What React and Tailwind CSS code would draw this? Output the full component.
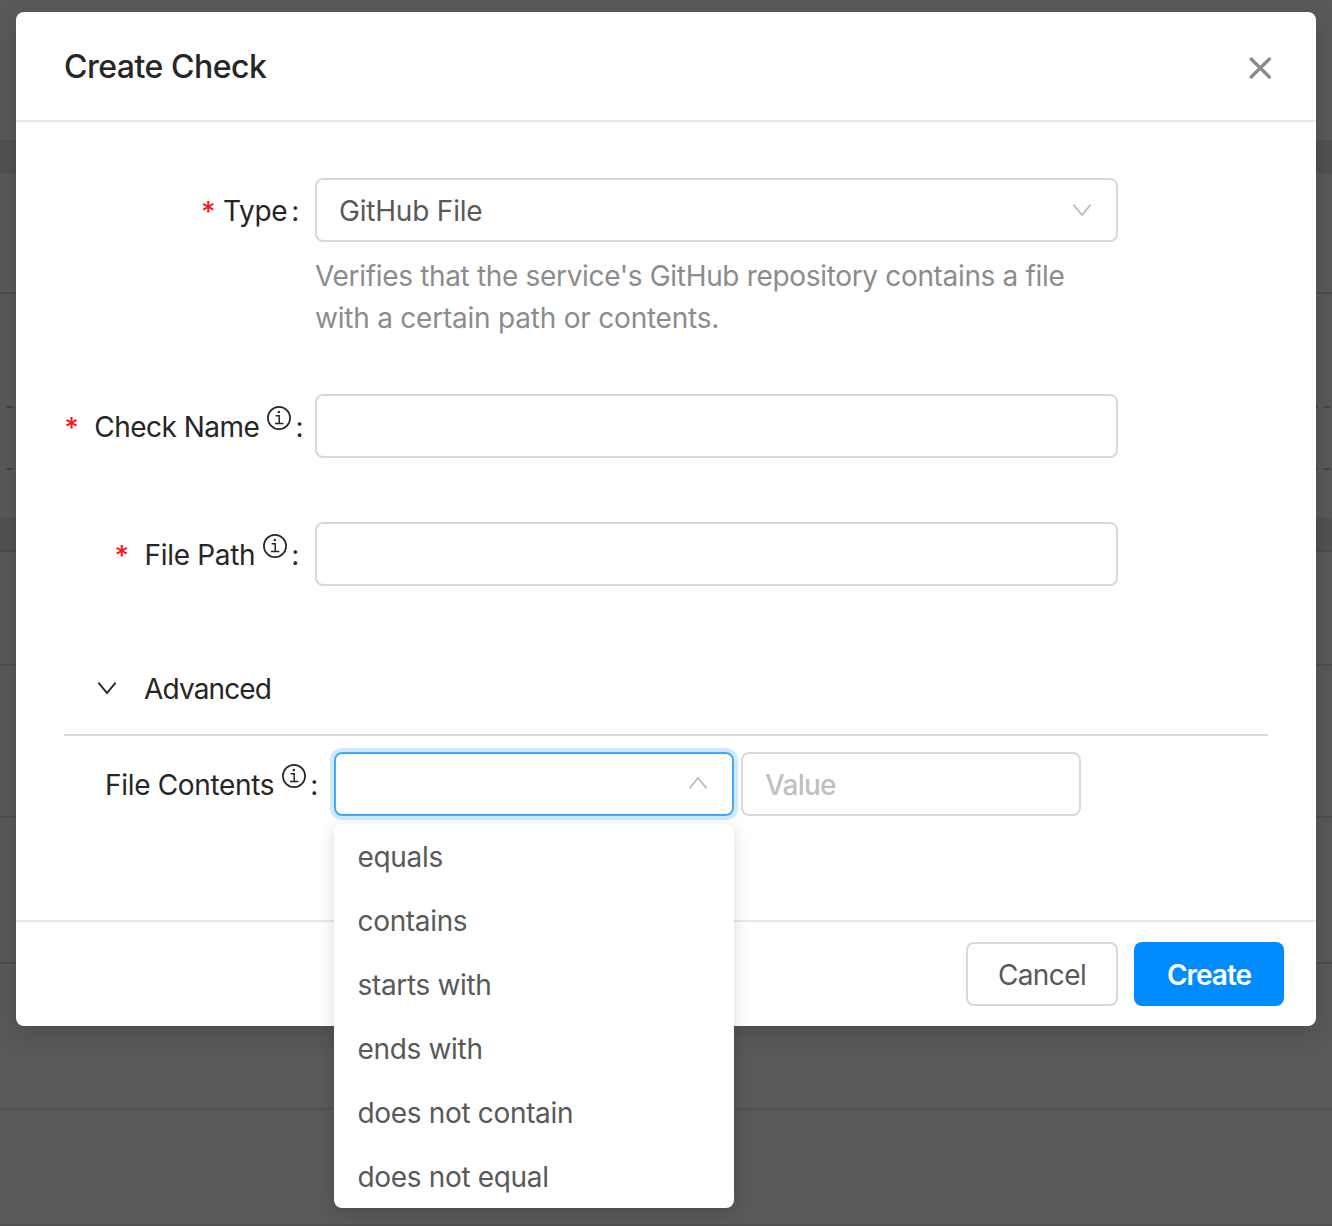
import { useState } from "react";
import clsx from "clsx";

const OPERATORS = ["equals", "contains", "starts with", "ends with", "does not contain", "does not equal"];

function Chevron({ up, className }) {
  return (
    <svg viewBox="0 0 20 14" className={clsx("h-[14px] w-5 shrink-0", className)} fill="none" stroke="currentColor" strokeWidth="1.9">
      {up ? <path d="M1.4 12.4 L10 2 L18.6 12.4" /> : <path d="M1.4 1.6 L10 12 L18.6 1.6" />}
    </svg>
  );
}

function InfoIcon() {
  return (
    <svg viewBox="0 0 24 24" className="mb-[19px] ml-2 h-6 w-6 shrink-0" fill="none" stroke="currentColor" strokeWidth="1.7">
      <circle cx="12" cy="12" r="11.1" />
      <path d="M8.6 9.7h3.6v7.6M8 17.4h8.4" strokeWidth="1.5" />
      <circle cx="11.8" cy="6" r="1.2" fill="currentColor" stroke="none" />
    </svg>
  );
}

function Label({ text, required, info, className }) {
  return (
    <div className={clsx("flex h-16 shrink-0 items-center justify-end whitespace-nowrap pt-0.5 text-[#262626]", className)}>
      {required && (
        <span className={clsx("flex w-[14px] justify-center pt-px text-[28px] font-medium text-[#fa1622]", info ? "mr-4" : "mr-2")}>
          *
        </span>
      )}
      <span>{text}</span>
      {info && <InfoIcon />}
      <span className="ml-1">:</span>
    </div>
  );
}

function DashedLine() {
  return (
    <div className="h-0.5 bg-[repeating-linear-gradient(90deg,transparent_0_6px,#424242_6px_11.975px)] bg-[position:0.7px_0]" />
  );
}

/* table rows that stay visible behind the mask */
function PageBehind() {
  return (
    <div className="flex h-full flex-col bg-[#595959]">
      <div className="h-[142px] border-b-2 border-[#4f4f4f]" />
      <div className="h-8 bg-[#515153]" />
      <div className="h-[120px] border-b-2 border-[#4d4d4d]" />
      <div className="h-28" />
      <DashedLine />
      <div className="h-[60px]" />
      <DashedLine />
      <div className="h-12" />
      <div className="h-[34px] border-b-2 border-[#4b4b4b] bg-[#515153]" />
      <div className="h-[114px] border-b-2 border-[#4d4d4d]" />
      <div className="h-[152px] border-b-2 border-[#4d4d4d]" />
      <div className="h-[146px] border-b-2 border-[#4d4d4d]" />
      <div className="h-[146px] border-b-2 border-[#515151]" />
      <div className="h-[116px] border-b-2 border-[#515151]" />
    </div>
  );
}

export default function App() {
  const [name, setName] = useState("");
  const [path, setPath] = useState("");
  const [operator, setOperator] = useState("");
  const [value, setValue] = useState("");

  return (
    <div className="relative h-[1226px] w-[1332px] overflow-hidden font-['Inter',sans-serif] text-[28px] leading-[42px] tracking-[-0.33px] text-[#595959]">
      <PageBehind />

      <div className="absolute inset-0 px-4 pt-3">
        <div className="flex h-[1014px] flex-col rounded-lg bg-white shadow-[0_8px_24px_rgba(0,0,0,0.15)]">
          <header className="flex h-[110px] shrink-0 items-center justify-between border-b-2 border-[#e8e8e8] pr-11 pl-12">
            <h1 className="pt-0.5 text-[32px] font-medium tracking-[-0.5px] text-[#262626]">Create Check</h1>
            <button aria-label="Close" className="mt-1 text-[#8c8c8c]">
              <svg viewBox="0 0 24 24" className="h-6 w-6" fill="none" stroke="currentColor" strokeWidth="3.4" strokeLinecap="round">
                <path d="M3.2 3 L21.4 21 M21.4 3 L3.2 21" />
              </svg>
            </button>
          </header>

          <div className="flex-1 px-12 pt-14">
            <div className="flex">
              <Label text="Type" required className="w-[251px] pr-4" />
              <div className="w-[803px]">
                <button className="flex h-16 w-full items-center justify-between rounded-lg border-2 border-[#d9d9d9] pr-6 pl-[22px]">
                  <span className="pt-0.5 tracking-[-0.2px]">GitHub File</span>
                  <Chevron className="text-[#bfbfbf]" />
                </button>
                <p className="mt-[13px] whitespace-nowrap text-[#8c8c8c]">
                  Verifies that the service's GitHub repository contains a file
                  <br />
                  <span className="tracking-[-0.22px]">with a certain path or contents.</span>
                </p>
              </div>
            </div>

            <div className="mt-[55px] flex">
              <Label text="Check Name" required info className="w-[251px] pr-3 tracking-[-0.5px]" />
              <input
                value={name}
                onChange={(e) => setName(e.target.value)}
                className="h-16 w-[803px] rounded-lg border-2 border-[#d9d9d9] px-[22px] outline-none"
              />
            </div>

            <div className="mt-16 flex">
              <Label text="File Path" required info className="w-[251px] pr-4" />
              <input
                value={path}
                onChange={(e) => setPath(e.target.value)}
                className="h-16 w-[803px] rounded-lg border-2 border-[#d9d9d9] px-[22px] outline-none"
              />
            </div>

            <div className="mt-[82px] flex h-[68px] items-start border-b-2 border-[#d9d9d9] pl-[33px] text-[#262626]">
              <Chevron className="mt-[13px]" />
              <span className="ml-[27px] tracking-[-0.85px]">Advanced</span>
            </div>

            <div className="mt-4 flex">
              <Label text="File Contents" info className="w-[270px] pr-4" />
              <div className="relative w-[400px]">
                <button className="flex h-16 w-full items-center justify-between rounded-lg border-2 border-[#40a9ff] pr-6 pl-[22px] shadow-[0_0_0_4px_rgba(24,144,255,0.2)]">
                  <span>{operator}</span>
                  <Chevron up className="mb-0.5 text-[#bfbfbf]" />
                </button>
                <ul className="absolute top-[72px] left-0 h-96 w-full rounded-lg bg-white shadow-[0_4px_16px_rgba(0,0,0,0.15)]">
                  {OPERATORS.map((op) => (
                    <li
                      key={op}
                      onClick={() => setOperator(op)}
                      className="flex h-16 items-center pt-0.5 pr-6 pl-[23.5px]"
                    >
                      {op}
                    </li>
                  ))}
                </ul>
              </div>
              <input
                value={value}
                onChange={(e) => setValue(e.target.value)}
                placeholder="Value"
                className="ml-[7px] h-16 w-[340px] rounded-lg border-2 border-[#d9d9d9] px-[22px] pt-0.5 font-medium tracking-[-0.8px] outline-none placeholder:text-[#bfbfbf]"
              />
            </div>
          </div>

          <footer className="flex h-[106px] shrink-0 items-center justify-end gap-4 border-t-2 border-[#e8e8e8] px-8">
            <button className="h-16 w-[152px] rounded-lg border-2 border-[#d9d9d9] pt-0.5 tracking-[-0.6px]">Cancel</button>
            <button className="h-16 w-[150px] rounded-lg bg-[#008cff] pt-0.5 font-semibold tracking-[-1px] text-white">Create</button>
          </footer>
        </div>
      </div>
    </div>
  );
}
